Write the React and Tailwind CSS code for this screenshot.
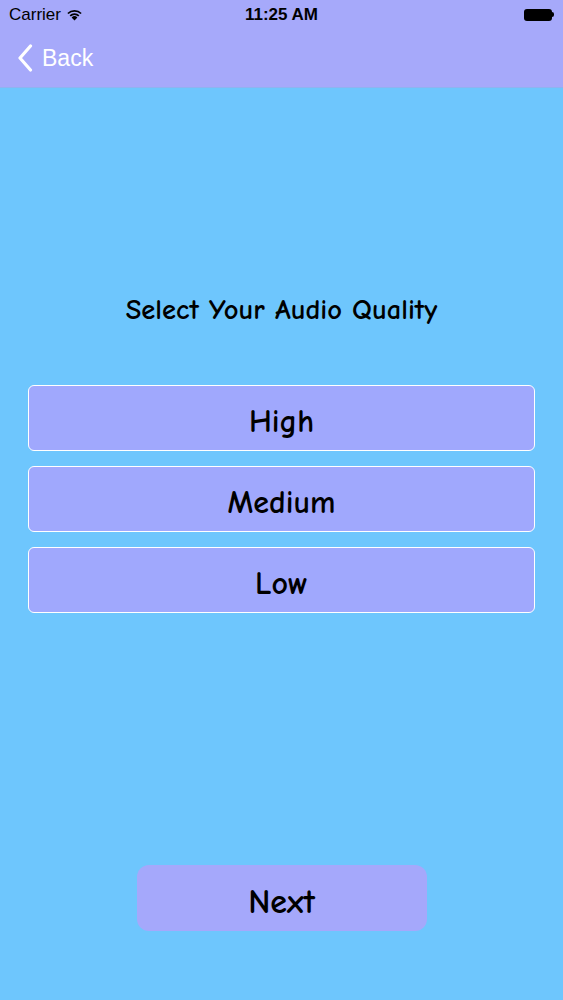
import React from "react";

const options = ["High", "Medium", "Low"];

const comic = { fontFamily: '"Comic Sans MS", "Comic Neue", "DejaVu Sans", sans-serif' };

function StatusBar() {
  return (
    <div className="h-[29px] flex items-center justify-between px-[9px] text-[17px] text-black font-['Liberation_Sans',sans-serif]">
      <div className="flex items-center gap-[5px] w-[120px]">
        <span>Carrier</span>
        <svg width="17" height="12" viewBox="0 0 17 12">
          <path d="M8.5 11.5 L5.6 8.4 A4.2 4.2 0 0 1 11.4 8.4 Z" fill="#000" />
          <path d="M3.6 6.3 A7 7 0 0 1 13.4 6.3 L12.2 7.6 A5.3 5.3 0 0 0 4.8 7.6 Z" fill="#000" />
          <path d="M1.3 3.9 A10.3 10.3 0 0 1 15.7 3.9 L14.5 5.1 A8.6 8.6 0 0 0 2.5 5.1 Z" fill="#000" />
        </svg>
      </div>
      <span className="font-semibold text-[17px]">11:25 AM</span>
      <div className="w-[120px] flex justify-end">
        <div className="flex items-center">
          <div className="w-[28px] h-[12px] bg-black rounded-[3px]" />
          <div className="w-[2px] h-[5px] bg-black rounded-r-sm" />
        </div>
      </div>
    </div>
  );
}

export default function App() {
  return (
    <div className="w-[563px] h-[1000px] bg-[#6ec6fd] flex flex-col overflow-hidden">
      <div className="bg-[#a6a9fa] h-[88px] border-b border-[#8fb3f0] flex flex-col">
        <StatusBar />
        <div className="flex items-center gap-[9px] pl-[17px] mt-[12px] text-white">
          <svg width="16" height="28" viewBox="0 0 16 28">
            <path d="M13.5 2 L3 14 L13.5 26" fill="none" stroke="#fff" strokeWidth="3.2" strokeLinecap="round" strokeLinejoin="round" />
          </svg>
          <span className="text-[23px] font-['Liberation_Sans',sans-serif]">Back</span>
        </div>
      </div>

      <div className="flex flex-col items-center flex-1 font-bold" style={comic}>
        <h1 className="mt-[206px] h-[32px] leading-[32px] text-[28.5px] text-black">Select Your Audio Quality</h1>
        <div className="mt-[59px] w-full px-[28px] flex flex-col gap-[15px]">
          {options.map((o) => (
            <button
              key={o}
              className="h-[66px] w-full rounded-[6px] border-[1.5px] border-white bg-[#a0a8fd] text-[32px] leading-[40px] text-black pt-[8px]"
            >
              {o}
            </button>
          ))}
        </div>
        <button className="mt-[252px] w-[290px] h-[66px] rounded-[12px] bg-[#a5a8fb] text-[34px] leading-[40px] text-black pt-[7px]">
          Next
        </button>
      </div>
    </div>
  );
}
